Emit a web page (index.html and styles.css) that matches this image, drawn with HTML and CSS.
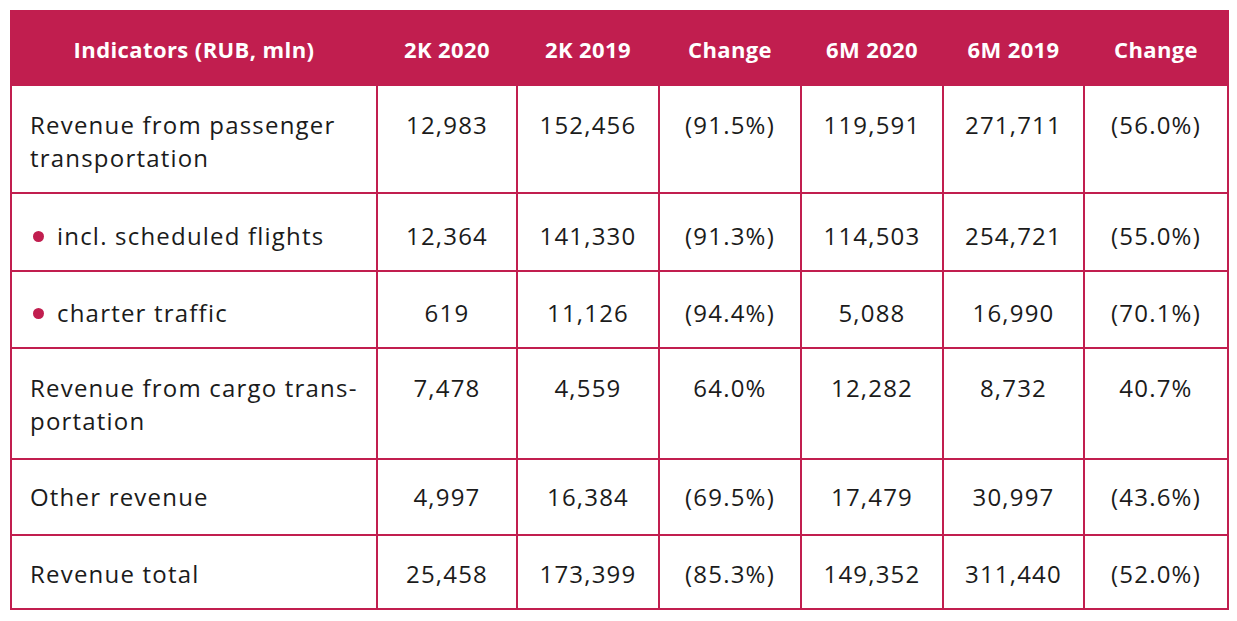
FILE: index.html
```html
<!DOCTYPE html>
<html>
<head>
<meta charset="utf-8">
<link rel="stylesheet" href="styles.css">
</head>
<body>
<div class="wrap">
<table class="rev">
<colgroup>
<col class="c-ind"><col class="c-a"><col class="c-b"><col class="c-c"><col class="c-d"><col class="c-e"><col class="c-f">
</colgroup>
<thead>
<tr class="r-head">
<th>Indicators (RUB, mln)</th><th>2K 2020</th><th>2K 2019</th><th>Change</th><th>6M 2020</th><th>6M 2019</th><th>Change</th>
</tr>
</thead>
<tbody>
<tr class="r1">
<td class="lbl">Revenue from passenger transportation</td><td>12,983</td><td>152,456</td><td>(91.5%)</td><td>119,591</td><td>271,711</td><td>(56.0%)</td>
</tr>
<tr class="r2">
<td class="lbl"><span class="dot"></span>incl. scheduled flights</td><td>12,364</td><td>141,330</td><td>(91.3%)</td><td>114,503</td><td>254,721</td><td>(55.0%)</td>
</tr>
<tr class="r3">
<td class="lbl"><span class="dot"></span>charter traffic</td><td>619</td><td>11,126</td><td>(94.4%)</td><td>5,088</td><td>16,990</td><td>(70.1%)</td>
</tr>
<tr class="r4">
<td class="lbl">Revenue from cargo trans-<br>portation</td><td>7,478</td><td>4,559</td><td>64.0%</td><td>12,282</td><td>8,732</td><td>40.7%</td>
</tr>
<tr class="r5">
<td class="lbl">Other revenue</td><td>4,997</td><td>16,384</td><td>(69.5%)</td><td>17,479</td><td>30,997</td><td>(43.6%)</td>
</tr>
<tr class="r6">
<td class="lbl">Revenue total</td><td>25,458</td><td>173,399</td><td>(85.3%)</td><td>149,352</td><td>311,440</td><td>(52.0%)</td>
</tr>
</tbody>
</table>
</div>
</body>
</html>
```
FILE: styles.css
```css
html, body {
  margin: 0;
  padding: 0;
  background: #ffffff;
}
.wrap {
  padding: 10px 10px 0 10px;
}
.rev {
  border-collapse: collapse;
  table-layout: fixed;
  width: 1217px;
  font-family: "Open Sans", "Liberation Sans", sans-serif;
  color: #1b1b1b;
  font-size: 24px;
  line-height: 33px;
  letter-spacing: 1.2px;
}
.c-ind { width: 366px; }
.c-a { width: 140px; }
.c-b { width: 142px; }
.c-c { width: 142px; }
.c-d { width: 142px; }
.c-e { width: 141px; }
.c-f { width: 144px; }
.rev th {
  background: #c11e4f;
  color: #ffffff;
  font-weight: 700;
  font-size: 22px;
  letter-spacing: 0.4px;
  text-align: center;
  vertical-align: middle;
  border: 2px solid #c11e4f;
  height: 69px;
  padding: 3px 0 0 0;
}
.rev td {
  border: 2px solid #c11e4f;
  text-align: center;
  vertical-align: top;
  padding: 22px 2px 0 2px;
}
.rev td.lbl {
  text-align: left;
  padding-left: 18px;
}
.r1 td { height: 84px; }
.r2 td { height: 51px; padding-top: 25px; }
.r3 td { height: 51px; padding-top: 24px; }
.r4 td { height: 87px; }
.r5 td { height: 54px; padding-top: 20px; }
.r6 td { height: 51px; padding-top: 21px; }
.dot {
  display: inline-block;
  width: 11px;
  height: 11px;
  border-radius: 50%;
  background: #c11e4f;
  margin: 0 13px 0 3px;
  vertical-align: 3px;
}
```
